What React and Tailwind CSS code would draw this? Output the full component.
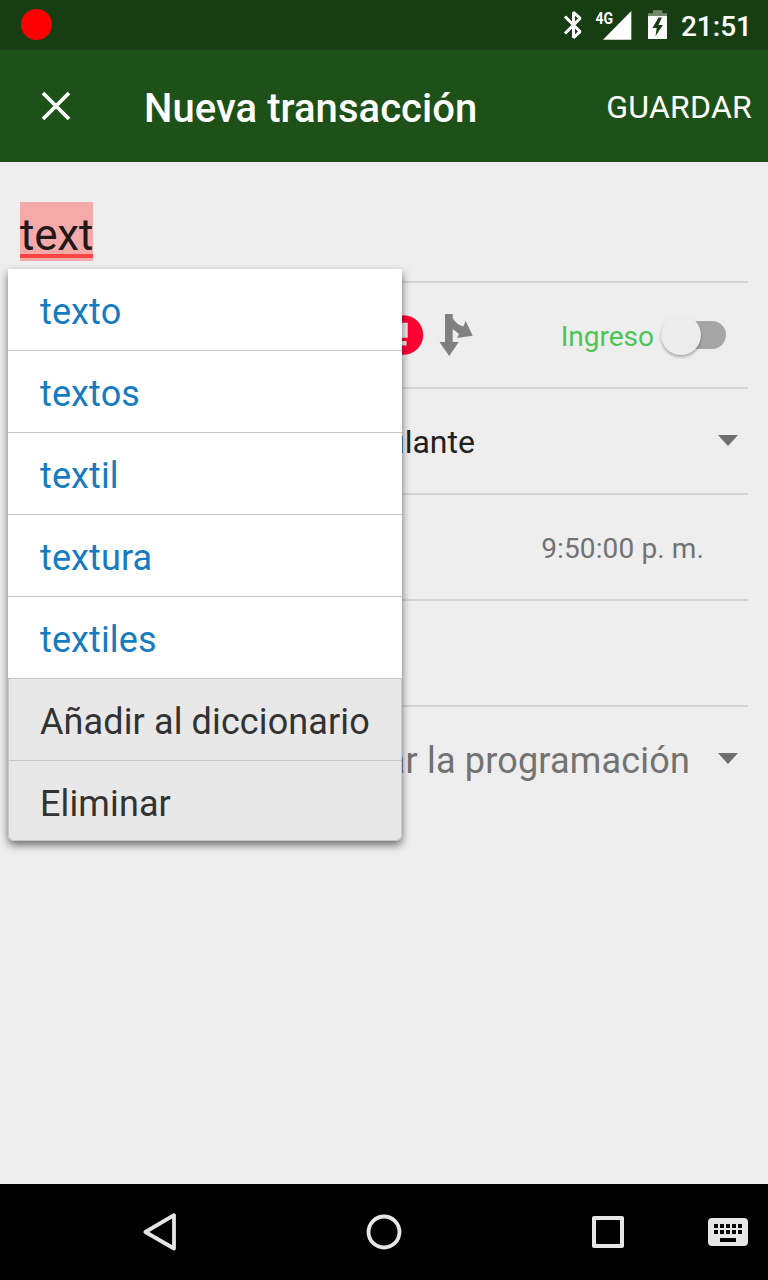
const suggestions = ['texto', 'textos', 'textil', 'textura', 'textiles'];

function StatusBar() {
  return (
    <div className="flex h-[50px] items-center bg-[#163e12] pl-[21px] pr-4">
      <div className="mb-px size-[31px] rounded-full bg-[#ff0000]" />
      <svg className="ml-auto h-[50px] w-[112px]" viewBox="558 0 112 50" fill="none">
        <path d="M565 16.500l15.200 15.200-6.700 6V12.300l6.700 6L565 33.500" stroke="#fff" strokeWidth="3" strokeLinejoin="bevel" />
        <path d="M631.300 11v28.700H603z" fill="#fff" />
        <text x="595.500" y="23.500" fill="#fff" fontFamily="Roboto" fontSize="16" fontWeight="700" textLength="17.500" lengthAdjust="spacingAndGlyphs">4G</text>
        <path d="M653 10.300h9.300v3h4.700v2.700H648v-2.700h5z" fill="#73896f" />
        <path fillRule="evenodd" d="M648 16h19v23h-19zM658.500 17.500l-6 10.500h4.200l-1.200 8 7.500-11h-4.500l3.300-7.500z" fill="#fff" />
      </svg>
      <span className="ml-[11px] mt-[3px] text-[28px] leading-8 font-medium text-white">21:51</span>
    </div>
  );
}

function AppBar() {
  return (
    <header className="flex h-28 items-center bg-[#1d5118] pr-4 pl-9 text-white">
      <svg className="size-10" viewBox="0 0 40 40" stroke="#fff" strokeWidth="3.8">
        <path d="M7 7l26 26M33 7L7 33" />
      </svg>
      <h1 className="mt-1.5 ml-[68px] text-[40px] leading-12 font-medium tracking-[0.05px]">Nueva transacción</h1>
      <button className="mt-0.5 ml-auto text-[32px] leading-10 tracking-[0.25px]">GUARDAR</button>
    </header>
  );
}

function Row({ children }) {
  return (
    <div className="flex h-[106px] items-center justify-end border-b-2 border-[#d3d3d3]">{children}</div>
  );
}

function Caret() {
  return (
    <svg className="mr-2.5 mb-0.5 h-[11px] w-5" viewBox="0 0 20 11">
      <path d="M0 0h20L10 11z" fill="#6e6e6e" />
    </svg>
  );
}

function Suggestions() {
  return (
    <div className="absolute top-[269px] left-2 w-[394px] rounded-b-[6px] text-[36px] leading-[44px] tracking-[0.12px] shadow-[0_4px_8px_rgba(0,0,0,0.55)]">
      {suggestions.map((word) => (
        <div key={word} className="flex h-[82px] items-center border-b border-[#c6c6c6] bg-white pt-[5px] pl-8 text-[#167cc2]">
          {word}
        </div>
      ))}
      <div className="rounded-b-[6px] border-x border-b border-[#c6c6c6] bg-[#e8e8e8] text-[#323232]">
        <div className="flex h-[82px] items-center border-b border-[#c6c6c6] pt-[5px] pl-[31px] whitespace-nowrap">Añadir al diccionario</div>
        <div className="flex h-[79px] items-center pt-[7px] pl-[31px]">Eliminar</div>
      </div>
    </div>
  );
}

function NavBar() {
  return (
    <nav className="flex h-24 items-center bg-black pr-5 pl-[140px]">
      <svg className="size-10" viewBox="140 1212 40 40" fill="none" stroke="#e6e6e6" strokeWidth="3.800" strokeLinejoin="round">
        <path d="M174 1215.200v33.300L145.400 1232z" />
      </svg>
      <svg className="ml-[184px] size-10" viewBox="0 0 40 40" fill="none" stroke="#e6e6e6" strokeWidth="3.800">
        <circle cx="20" cy="20" r="15.500" />
      </svg>
      <svg className="ml-[184px] size-10" viewBox="0 0 40 40" fill="none" stroke="#e6e6e6" strokeWidth="4" strokeLinejoin="round">
        <rect x="6" y="6" width="28" height="28" />
      </svg>
      <svg className="ml-auto h-7 w-10" viewBox="0 0 40 28">
        <rect width="40" height="28" rx="4" fill="#e6e6e6" />
        <path d="M6 6h4v4H6zm6 0h4v4h-4zm6 0h4v4h-4zm6 0h4v4h-4zm6 0h4v4h-4zM6 12h4v4H6zm6 0h4v4h-4zm6 0h4v4h-4zm6 0h4v4h-4zm6 0h4v4h-4zM12 20h16v4H12z" fill="#000" />
      </svg>
    </nav>
  );
}

export default function App() {
  return (
    <div className="relative flex h-[1280px] w-[768px] flex-col overflow-hidden bg-[#eeeeee] font-['Roboto',sans-serif]">
      <StatusBar />
      <AppBar />
      <main className="flex-1 px-5">
        <div className="h-[121px] border-b-2 border-[#d3d3d3] pt-10">
          <div className="h-[59px] w-[73px] bg-[#f5aaaa] pt-[5px]">
            <div className="h-[51px] border-b-4 border-[#ff4444] text-[44px] leading-[56px] tracking-[-0.2px] whitespace-nowrap text-[#231918]">text</div>
          </div>
        </div>
        <Row>
          <svg className="mr-auto ml-[360px] h-12 w-[100px]" viewBox="380 311 100 48">
            <circle cx="403.500" cy="335" r="19.700" fill="#ff0033" />
            <path d="M400 322.700h7.700v15H400zM400 341h6.500v4.500H400z" fill="#eee" />
            <path d="M445 314h7.700v4.200c2.500 4 6 7 10.600 8.300l2.400-5.500 7 14.700-15.700 2.300 2-4c-2.500-2-4.300-3.500-6.300-4.700V342h6L449.200 356 439.500 342H445z" fill="#808080" />
          </svg>
          <span className="mt-[3px] mr-[7px] text-[28px] leading-8 text-[#4bc653]">Ingreso</span>
          <div className="mr-[22px] flex h-10 w-[65px] items-center">
            <div className="z-[1] size-10 shrink-0 rounded-full bg-[#ececec] shadow-[0_2px_3px_rgba(0,0,0,0.3)]" />
            <div className="-ml-4 h-7 w-[41px] rounded-r-full bg-[#a6a6a6]" />
          </div>
        </Row>
        <Row>
          <span className="mt-px mr-auto ml-[367px] text-[32px] leading-10 text-[#212121]">ulante</span>
          <Caret />
        </Row>
        <Row>
          <span className="mt-[3px] mr-11 text-[28px] leading-8 tracking-[0.12px] text-[#727272]">9:50:00 p. m.</span>
        </Row>
        <Row />
        <div className="flex h-[104px] items-center justify-end">
          <span className="mt-1 mr-7 text-[36px] leading-[44px] tracking-[0.18px] text-[#727272]">ar la programación</span>
          <Caret />
        </div>
      </main>
      <Suggestions />
      <NavBar />
    </div>
  );
}
